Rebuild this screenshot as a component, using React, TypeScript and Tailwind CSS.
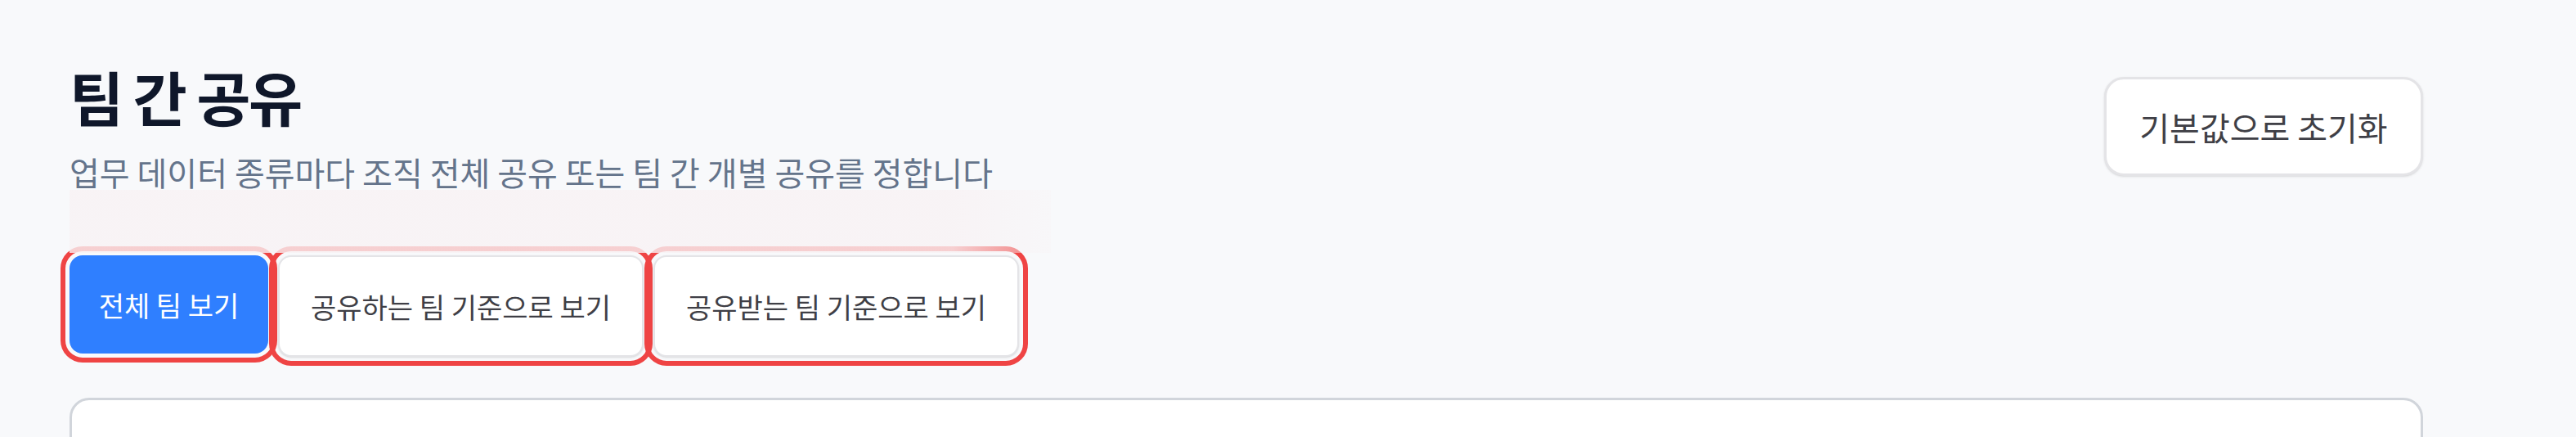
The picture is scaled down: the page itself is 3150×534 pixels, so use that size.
const tabs = [
  { name: "전체 팀 보기", active: true },
  { name: "공유하는 팀 기준으로 보기", active: false },
  { name: "공유받는 팀 기준으로 보기", active: false },
]

export default function App() {
  return (
    <div className="min-h-screen bg-[#f8f9fb] font-['Noto_Sans_CJK_KR','Noto_Sans',sans-serif]">
      <div className="relative pl-[85px] pr-[187px] pt-[74px]">
        {/* Header */}
        <div className="flex items-start justify-between">
          <div>
            <h1 className="text-[72px] font-bold leading-[86px] tracking-[-2.5px] text-[#0f172a]">팀 간 공유</h1>
            <p className="mt-[22px] text-[40px] leading-[56px] text-[#64748b]">
              업무 데이터 종류마다 조직 전체 공유 또는 팀 간 개별 공유를 정합니다
            </p>
          </div>
          <button className="mt-[20px] flex h-[121px] w-[390px] items-center justify-center rounded-[24px] border-[3px] border-[#e4e4e7] bg-white text-[40px] text-[#3f3f46] shadow-sm">
            기본값으로 초기화
          </button>
        </div>

        {/* Tabs */}
        <div className="mt-[74px] flex items-start gap-[12px]">
          {tabs.map((tab) =>
            tab.active ? (
              <button
                key={tab.name}
                className="flex h-[120px] w-[243px] items-center justify-center rounded-[16px] bg-[#2f7fff] text-[34px] text-white outline-[6px] outline-offset-[5px] outline-[#ef4444] outline-solid"
              >
                {tab.name}
              </button>
            ) : (
              <button
                key={tab.name}
                className="flex h-[124px] w-[447px] items-center justify-center rounded-[16px] border-2 border-[#e4e4e7] bg-white text-[34px] text-[#3f3f46] shadow-sm outline-[6px] outline-offset-[5px] outline-[#ef4444] outline-solid"
              >
                {tab.name}
              </button>
            )
          )}
        </div>

        {/* fade over top of tab row */}
        <div className="pointer-events-none absolute left-[85px] top-[232px] h-[77px] w-[1200px] bg-gradient-to-r from-[#f8f2f4]/80 via-[#f8f2f4]/80 via-90% to-[#f8f2f4]/30" />

        {/* Card */}
        <div className="mt-[50px] h-[200px] rounded-[24px] border-[3px] border-[#d1d5db] bg-white" />
      </div>
    </div>
  )
}
